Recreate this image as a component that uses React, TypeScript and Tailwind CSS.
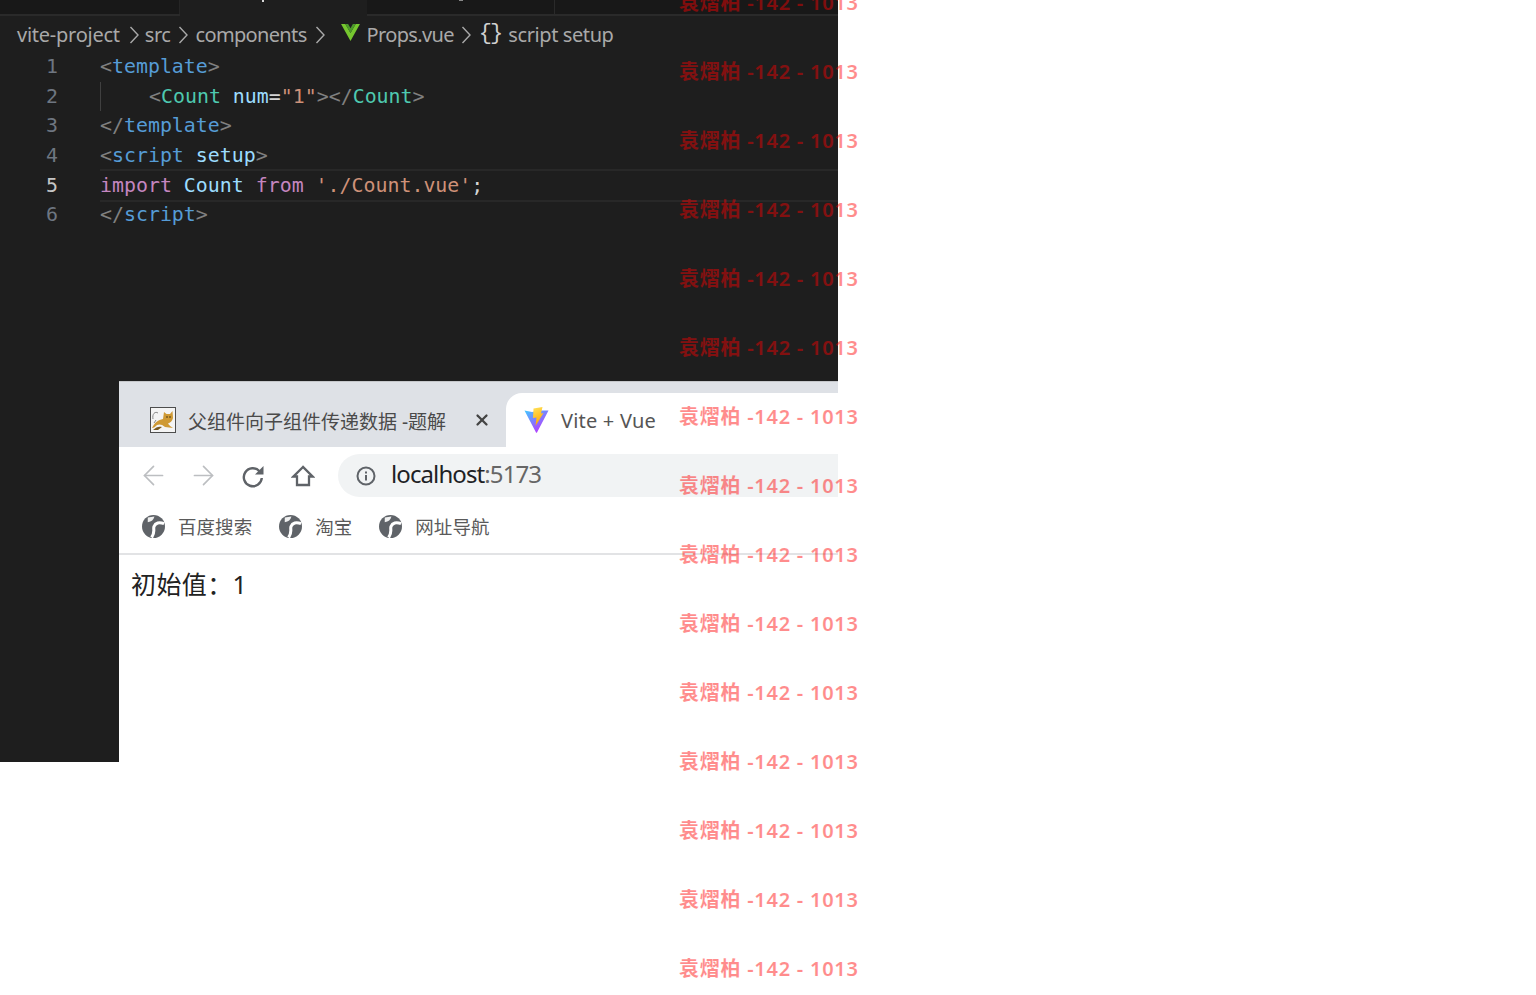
import { ArrowLeft, ArrowRight, X } from 'lucide-react';

const watermarkRows = Array.from({ length: 15 });

function Chevron() {
  return (
    <svg width="10" height="18" viewBox="0 0 10 18" fill="none" stroke="currentColor" strokeWidth="1.4" className="shrink-0">
      <path d="M1.5 1l7.5 8-7.5 8" />
    </svg>
  );
}

function VueIcon() {
  return (
    <svg width="19" height="17" viewBox="0 0 20 18" className="shrink-0">
      <path d="M0 0h4.5L10 9.5 15.5 0H20L10 18z" fill="#76c72f" />
      <path d="M4.5 0h3L10 4.5 12.5 0h3L10 9.5z" fill="#4c9a2a" />
    </svg>
  );
}

function ViteIcon() {
  return (
    <svg width="25" height="26" viewBox="0 0 25 26">
      <defs>
        <linearGradient id="viteBody" x1="0" y1="0" x2="0.7" y2="1">
          <stop offset="0" stopColor="#41c8ff" />
          <stop offset="1" stopColor="#bd34fe" />
        </linearGradient>
        <linearGradient id="viteBolt" x1="0" y1="0" x2="0.3" y2="1">
          <stop offset="0" stopColor="#ffe45c" />
          <stop offset="1" stopColor="#ffa800" />
        </linearGradient>
      </defs>
      <path d="M0.5 3.5 L8 5 L17 3.5 L24.5 3.5 L13 25.5 Q12.5 26 12 25.5 Z" fill="url(#viteBody)" />
      <path d="M9.5 1.5 L18.5 0 L17 6.5 L19.5 6 L11.5 19 L12.5 10.5 L9 11 Z" fill="url(#viteBolt)" />
    </svg>
  );
}

function TomcatIcon() {
  return (
    <svg width="26" height="26" viewBox="0 0 26 26">
      <rect x="0.5" y="0.5" width="25" height="25" fill="#f4f4f4" stroke="#4d4d4d" />
      <path d="M2 21 C5 15 8 13 13 12 L14 5 L16.5 7 L20 7 L22.5 4 L23 11 C22.5 14 20 16 18 16.5 C19 18 21 20 23 21 L15 20 C12 17 9 17 7 18 C5 20 4 21 2 21Z" fill="#cf9a35" />
      <path d="M3 23 C6 20 9 19 12 20 L8 23Z" fill="#7a5a1e" />
      <path d="M3 12 C2 7 5 4 8 6 M4 16 L6 13" fill="none" stroke="#888" strokeWidth="1" />
      <circle cx="17" cy="10" r="1" fill="#7a5a1e" />
      <circle cx="20" cy="10" r="1" fill="#7a5a1e" />
    </svg>
  );
}

function EarthIcon() {
  return (
    <svg width="23" height="23" viewBox="0 0 24 24" className="shrink-0">
      <circle cx="12" cy="12" r="12" fill="#5f6368" />
      <path d="M23 9 C18 7 14 8 12.5 12 C11.5 15 14 18 10 23.5" fill="none" stroke="#fff" strokeWidth="3.2" />
      <path d="M6 2.5 L13 1.5 C12 5 10 7 6 7.5Z" fill="#fff" opacity="0.9" />
    </svg>
  );
}

function InfoIcon() {
  return (
    <svg width="22" height="22" viewBox="0 0 22 22" fill="none" stroke="#5f6368" strokeWidth="2">
      <circle cx="11" cy="11" r="8.5" />
      <path d="M11 10v5.5M11 6.5v2" />
    </svg>
  );
}

function ReloadIcon() {
  return (
    <svg width="24" height="24" viewBox="0 0 24 24" fill="none">
      <path d="M18.5 7.2 A9 9 0 1 0 20.8 14" stroke="#5f6368" strokeWidth="2.4" />
      <path d="M22.5 2 V10.5 H14Z" fill="#5f6368" />
    </svg>
  );
}

function HomeIcon() {
  return (
    <svg width="24" height="24" viewBox="0 0 24 24" fill="none" stroke="#5f6368" strokeWidth="2.3" strokeLinejoin="miter">
      <path d="M12 3 L2.5 12.5 H6 V21 H18 V12.5 H21.5Z" />
    </svg>
  );
}

export default function App() {
  return (
    <div className="relative min-h-[995px] overflow-hidden bg-white font-['Noto_Sans','Noto_Sans_CJK_SC',sans-serif]">
      <div className="flex h-[762px] w-[838px] flex-col bg-[#1e1e1e]">
        {/* Tabs */}
        <div className="flex h-4 shrink-0 border-b-2 border-[#2a2a2a] bg-[#181818]">
          <div className="w-[180px] border-r border-[#252525]" />
          <div className="-mb-0.5 flex w-[187px] justify-center bg-[#1e1e1e]">
            <span className="ml-[-22px] h-0.5 w-0.5 bg-[#d8d8d8]" />
          </div>
          <div className="flex w-[188px] justify-center border-r border-[#2a2a2a]">
            <span className="mt-0 h-px w-1 bg-[#888]" />
          </div>
        </div>

        {/* Breadcrumbs */}
        <div className="flex h-[35px] shrink-0 items-center pl-[17px] pt-[3px] text-[20px] tracking-[-0.45px] text-[#a9a9a9]">
          <span className="tracking-[-0.25px]">vite-project</span>
          <span className="ml-[9px] mr-1.5"><Chevron /></span>
          <span>src</span>
          <span className="ml-2 mr-[7px]"><Chevron /></span>
          <span className="tracking-[-0.65px]">components</span>
          <span className="ml-2 mr-4"><Chevron /></span>
          <span className="-mt-1.5"><VueIcon /></span>
          <span className="ml-[7px] tracking-[-0.65px]">Props.vue</span>
          <span className="ml-[7px] mr-[8px]"><Chevron /></span>
          <span className="-mt-1 font-['Liberation_Mono',monospace] text-[22px] tracking-[-2px] text-[#d0d0d0]">{'{}'}</span>
          <span className="ml-[7px] tracking-[-0.4px]">script setup</span>
        </div>

        {/* Code */}
        <div className="flex-1 pt-px font-['DejaVu_Sans_Mono',monospace] text-[19.9px] leading-[29.7px]">
          <CodeLine n={1}>
            <G>{'<'}</G><B>template</B><G>{'>'}</G>
          </CodeLine>
          <CodeLine n={2} guide>
            <span className="pl-12" />
            <G>{'<'}</G><span className="text-[#4ec9b0]">Count</span> <span className="text-[#9cdcfe]">num</span><span className="text-[#d4d4d4]">=</span><span className="text-[#ce9178]">"1"</span><G>{'></'}</G><span className="text-[#4ec9b0]">Count</span><G>{'>'}</G>
          </CodeLine>
          <CodeLine n={3}>
            <G>{'</'}</G><B>template</B><G>{'>'}</G>
          </CodeLine>
          <CodeLine n={4}>
            <G>{'<'}</G><B>script</B> <span className="text-[#9cdcfe]">setup</span><G>{'>'}</G>
          </CodeLine>
          <CodeLine n={5} active>
            <span className="text-[#c586c0]">import</span> <span className="text-[#9cdcfe]">Count</span> <span className="text-[#c586c0]">from</span> <span className="text-[#ce9178]">'./Count.vue'</span><span className="text-[#d4d4d4]">;</span>
          </CodeLine>
          <CodeLine n={6}>
            <G>{'</'}</G><B>script</B><G>{'>'}</G>
          </CodeLine>
        </div>

        {/* Browser */}
        <div className="ml-[119px] flex h-[381px] shrink-0 flex-col bg-white">
          <div className="h-3 shrink-0 border-t border-[#c5c7ca] bg-[#dee1e6]" />
          <div className="flex h-[54px] shrink-0 bg-[#dee1e6]">
            <div className="flex w-[387px] items-center rounded-br-2xl pl-[31px]">
              <TomcatIcon />
              <span className="ml-[12px] w-[264px] truncate pt-1 text-[19px] text-[#4a4a4a]">父组件向子组件传递数据 -题解</span>
              <X size={18} strokeWidth={3} className="ml-[21px] text-[#444]" />
            </div>
            <div className="flex flex-1 items-center rounded-tl-2xl bg-white pl-[18px]">
              <ViteIcon />
              <span className="ml-3 pt-0.5 text-[20px] tracking-[0.2px] text-[#555]">Vite + Vue</span>
            </div>
          </div>
          <div className="flex h-[57px] shrink-0 items-center bg-white pl-[9px]">
            <div className="flex w-[50px] justify-center"><ArrowLeft size={31} strokeWidth={1.3} className="text-[#bcbec1]" /></div>
            <div className="flex w-[50px] justify-center"><ArrowRight size={31} strokeWidth={1.3} className="text-[#bcbec1]" /></div>
            <div className="flex w-[50px] justify-center"><ReloadIcon /></div>
            <div className="flex w-[50px] justify-center"><HomeIcon /></div>
            <div className="ml-[10px] flex h-[43px] flex-1 items-center rounded-l-full bg-[#f1f3f4] pl-[17px]">
              <InfoIcon />
              <span className="ml-[14px] pb-[3px] text-[24px] tracking-[-0.9px] text-[#202124]">localhost<span className="text-[#666]">:5173</span></span>
            </div>
          </div>
          <div className="flex h-[51px] shrink-0 items-center border-b-2 border-[#e2e3e5] pb-1 pl-[23px] text-[18.5px] tracking-[0.05px] text-[#5a5a5a]">
            <EarthIcon />
            <span className="ml-[13px]">百度搜索</span>
            <span className="ml-[27px]"><EarthIcon /></span>
            <span className="ml-[13px]">淘宝</span>
            <span className="ml-[27px]"><EarthIcon /></span>
            <span className="ml-[13px]">网址导航</span>
          </div>
          <div className="pl-3 pt-[13px] text-[25px] leading-8 tracking-[0.4px] text-[#222]">初始值：1</div>
        </div>
      </div>

      {/* Watermark */}
      <div className="absolute left-[679px] top-[-11px] flex flex-col gap-[41px] text-[20px] leading-7 font-semibold tracking-[0.75px] text-[#ff0000]/45">
        {watermarkRows.map((_, i) => (
          <div key={i} className="whitespace-nowrap">袁熠柏 -142 - 1013</div>
        ))}
      </div>
    </div>
  );
}

function G({ children }: { children: React.ReactNode }) {
  return <span className="text-[#808080]">{children}</span>;
}

function B({ children }: { children: React.ReactNode }) {
  return <span className="text-[#569cd6]">{children}</span>;
}

function CodeLine({ n, active, guide, children }: { n: number; active?: boolean; guide?: boolean; children: React.ReactNode }) {
  return (
    <div className="flex h-[29.7px] items-center">
      <span className={`w-[100px] shrink-0 pl-[46px] ${active ? 'text-[#c6c6c6]' : 'text-[#6e7681]'}`}>{n}</span>
      <div className={`flex-1 whitespace-pre ${active ? 'border-y-2 border-[#282828]' : ''} ${guide ? 'border-l border-[#404040]' : ''}`}>
        {children}
      </div>
    </div>
  );
}
